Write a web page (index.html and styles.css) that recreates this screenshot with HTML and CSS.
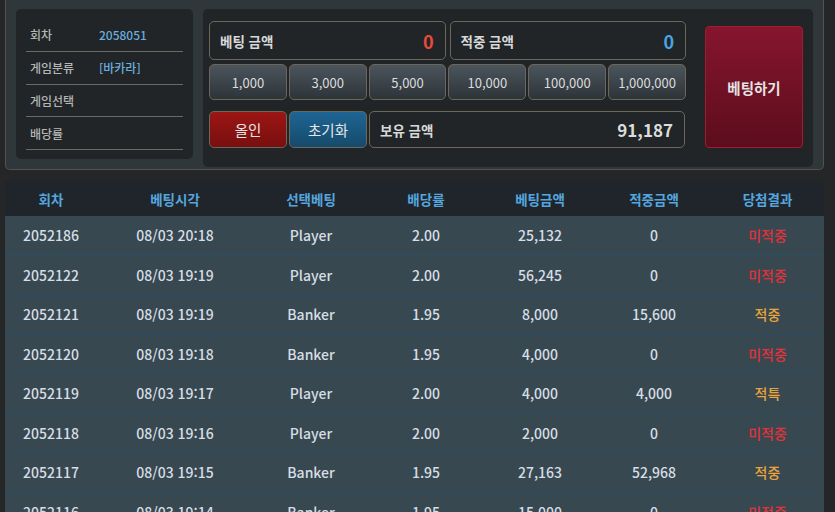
FILE: index.html
```html
<!DOCTYPE html>
<html lang="ko">
<head>
<meta charset="utf-8">
<link rel="stylesheet" href="styles.css">
</head>
<body>
<div class="panel">
  <div class="info">
    <div class="info-row"><span class="info-label">회차</span><span class="info-value">2058051</span></div>
    <div class="info-row"><span class="info-label">게임분류</span><span class="info-value">[바카라]</span></div>
    <div class="info-row"><span class="info-label">게임선택</span><span class="info-value"></span></div>
    <div class="info-row"><span class="info-label">배당률</span><span class="info-value"></span></div>
  </div>
  <div class="bet">
    <div class="bet-main">
      <div class="bet-row1">
        <div class="field"><span class="field-label">베팅 금액</span><span class="field-num red">0</span></div>
        <div class="field"><span class="field-label">적중 금액</span><span class="field-num blue">0</span></div>
      </div>
      <div class="chips">
        <button class="chip">1,000</button>
        <button class="chip">3,000</button>
        <button class="chip">5,000</button>
        <button class="chip">10,000</button>
        <button class="chip">100,000</button>
        <button class="chip">1,000,000</button>
      </div>
      <div class="bet-row3">
        <button class="act allin">올인</button>
        <button class="act reset">초기화</button>
        <div class="field hold"><span class="field-label">보유 금액</span><span class="field-num white">91,187</span></div>
      </div>
    </div>
    <button class="submit">베팅하기</button>
  </div>
</div>

<div class="table">
  <div class="thead">
    <div>회차</div><div>베팅시각</div><div>선택베팅</div><div>배당률</div><div>베팅금액</div><div>적중금액</div><div>당첨결과</div>
  </div>
  <div class="tr"><div>2052186</div><div>08/03 20:18</div><div>Player</div><div>2.00</div><div>25,132</div><div>0</div><div class="lose">미적중</div></div>
  <div class="tr"><div>2052122</div><div>08/03 19:19</div><div>Player</div><div>2.00</div><div>56,245</div><div>0</div><div class="lose">미적중</div></div>
  <div class="tr"><div>2052121</div><div>08/03 19:19</div><div>Banker</div><div>1.95</div><div>8,000</div><div>15,600</div><div class="win">적중</div></div>
  <div class="tr"><div>2052120</div><div>08/03 19:18</div><div>Banker</div><div>1.95</div><div>4,000</div><div>0</div><div class="lose">미적중</div></div>
  <div class="tr"><div>2052119</div><div>08/03 19:17</div><div>Player</div><div>2.00</div><div>4,000</div><div>4,000</div><div class="win">적특</div></div>
  <div class="tr"><div>2052118</div><div>08/03 19:16</div><div>Player</div><div>2.00</div><div>2,000</div><div>0</div><div class="lose">미적중</div></div>
  <div class="tr"><div>2052117</div><div>08/03 19:15</div><div>Banker</div><div>1.95</div><div>27,163</div><div>52,968</div><div class="win">적중</div></div>
  <div class="tr"><div>2052116</div><div>08/03 19:14</div><div>Banker</div><div>1.95</div><div>15,000</div><div>0</div><div class="lose">미적중</div></div>
</div>
</body>
</html>
```
FILE: styles.css
```css
* { box-sizing: border-box; }
html, body { margin: 0; padding: 0; }
body {
  background: #242627;
  font-family: "Noto Sans CJK KR", "Noto Sans", sans-serif;
  color: #d5dde2;
  overflow: hidden;
  height: 512px;
}
button { font-family: inherit; cursor: pointer; margin: 0; }

.panel {
  margin: 0 11px 0 5px;
  height: 170px;
  background: #30373a;
  border: 1px solid #55524b;
  border-top: none;
  border-radius: 0 0 5px 5px;
  padding: 9px 10px 0 10px;
  display: flex;
  align-items: flex-start;
  gap: 10px;
}

.info {
  width: 177px;
  height: 150px;
  background: #212527;
  border-radius: 5px;
  padding: 10px 10px 0 10px;
}
.info-row {
  height: 32.75px;
  border-bottom: 1px solid #6f6a60;
  display: flex;
  align-items: center;
  padding-left: 4px;
  font-size: 12px;
}
.info-label { width: 69px; color: #b4b6b6; font-weight: 500; }
.info-value { color: #6aaddf; font-weight: 500; }

.bet {
  width: 610px;
  height: 158px;
  background: #212527;
  border-radius: 5px;
  padding: 12px 10px 0 6px;
  display: flex;
  align-items: flex-start;
  gap: 19px;
}
.bet-main { width: 477px; display: flex; flex-direction: column; }
.bet-row1 { display: flex; gap: 4px; height: 39px; }
.field {
  flex: 1;
  border: 1px solid #6e6759;
  border-radius: 5px;
  display: flex;
  align-items: center;
  justify-content: space-between;
  padding: 0 11px 0 10px;
}
.field-label { font-size: 13.5px; font-weight: 700; color: #d8d8d8; }
.field-num { font-size: 18px; font-weight: 700; }
.red { color: #e84a3c; }
.blue { color: #4ba4e2; }
.white { color: #dcdcdc; font-size: 17px; }

.chips { display: flex; gap: 2px; height: 36px; margin-top: 4px; }
.chip {
  flex: 1;
  border: 1px solid #6e6759;
  border-radius: 5px;
  background: linear-gradient(#4b555c, #2d3439);
  color: #dcdcdc;
  font-size: 13px;
  padding: 0;
}

.bet-row3 { display: flex; gap: 2px; height: 37px; margin-top: 11px; }
.act {
  width: 78px;
  border: 1px solid #6e6759;
  border-radius: 5px;
  color: #e6e6e6;
  font-size: 14.5px;
  padding: 0;
}
.allin { background: linear-gradient(#9c1614, #780f0f); }
.reset { background: linear-gradient(#1e6594, #164a6b); }
.hold { flex: 0 0 316px; }

.submit {
  width: 98px;
  height: 122px;
  margin-top: 5px;
  border: 1px solid #a31c2c;
  border-radius: 4px;
  background: linear-gradient(#86152e, #5c0d1d);
  color: #e4e4e4;
  font-size: 14.5px;
  font-weight: 700;
  padding: 0;
}

.table { margin: 11px 11px 0 5px; }
.thead, .tr {
  display: grid;
  grid-template-columns: 92px 156px 116px 114px 114px 114px 113px;
  text-align: center;
}
.thead {
  height: 35px;
  background: #1f252a;
  align-items: center;
  color: #55a5df;
  font-weight: 700;
  font-size: 13.5px;
}
.tr {
  height: 39.5px;
  background: #384851;
  border-bottom: 1px solid #2b4e63;
  align-items: center;
  color: #d6dee4;
  font-size: 14px;
  font-weight: 500;
}
.lose { color: #e0323a; }
.win { color: #e9a43a; }
```
